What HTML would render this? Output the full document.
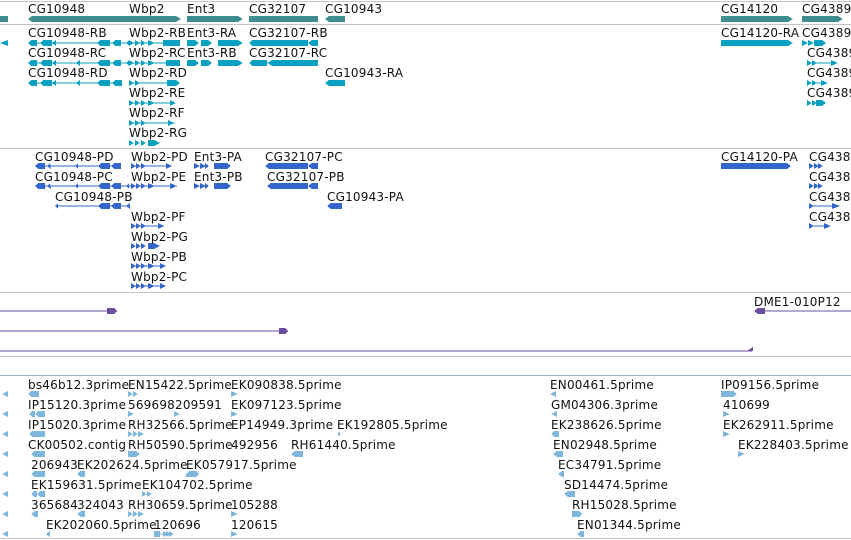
<!DOCTYPE html>
<html><head><meta charset="utf-8"><style>
html,body{margin:0;padding:0;background:#fff;width:851px;height:540px;overflow:hidden}
svg{display:block}
text{font-family:"DejaVu Sans","Liberation Sans",sans-serif;font-size:12px;fill:#111;letter-spacing:0.2px}
</style></head><body>
<svg width="851" height="540" viewBox="0 0 851 540" xmlns="http://www.w3.org/2000/svg" shape-rendering="crispEdges">
<rect x="0" y="1" width="851" height="1" fill="#c4c4c4"/>
<rect x="0" y="24" width="851" height="1" fill="#c4c4c4"/>
<rect x="0" y="148" width="851" height="1" fill="#c4c4c4"/>
<rect x="0" y="292" width="851" height="1" fill="#c4c4c4"/>
<rect x="0" y="356" width="851" height="1" fill="#c4c4c4"/>
<rect x="0" y="375" width="851" height="1" fill="#8fb7d6"/>
<rect x="0" y="538" width="851" height="1" fill="#c4c4c4"/>

<g fill="#3f8d8f">
<rect x="0" y="16" width="8" height="6"/>
<polygon points="28,19 32,16 176,16 181,19 176,22 32,22"/>
<polygon points="187,16 238,16 243,19 238,22 187,22"/>
<rect x="249" y="16" width="69" height="6"/>
<polygon points="325,19 329,16 345,16 345,22 329,22"/>
<polygon points="721,16 788,16 793,19 788,22 721,22"/>
<polygon points="802,16 838,16 843,19 838,22 802,22"/>
</g>
<text x="28" y="13">CG10948</text>
<text x="129" y="13">Wbp2</text>
<text x="187" y="13">Ent3</text>
<text x="249" y="13">CG32107</text>
<text x="325" y="13">CG10943</text>
<text x="721" y="13">CG14120</text>
<text x="802" y="13">CG4389</text>

<g fill="#0aa0c0">
<polygon points="0,43 8,40 8,46"/>
<rect x="28" y="42.5" width="152" height="1"/>
<polygon points="28,43 31,40 37,40 37,46 31,46"/><polygon points="40,43 43,40 52,40 52,46 43,46"/>
<polygon points="52,43 56,40 56,46"/>
<polygon points="97,43 100,40 110,40 110,46 100,46"/><polygon points="112,43 115,40 121,40 121,46 115,46"/>
<polygon points="126,43 129,40 129,46"/>
<polygon points="129,40 134,43 129,46"/><polygon points="135,40 140,43 135,46"/><polygon points="141,40 146,43 141,46"/><polygon points="148,40 155,43 148,46"/>
<polygon points="163,40 170,40 174,43 170,46 163,46"/><rect x="168" y="40" width="12" height="6"/>
<polygon points="187,40 195,40 199,43 195,46 187,46"/><polygon points="201,40 208,40 212,43 208,46 201,46"/><polygon points="218,40 238,40 243,43 238,46 218,46"/>
<polygon points="249,43 252,40 308,40 308,46 252,46"/><polygon points="308,43 312,40 318,40 318,46 312,46"/>
<polygon points="721,40 788,40 793,43 788,46 721,46"/>
<polygon points="802,40 808,43 802,46"/><polygon points="808,40 814,43 808,46"/><polygon points="814,40 822,40 826,43 822,46 814,46"/>

<rect x="28" y="62.5" width="152" height="1"/>
<polygon points="28,63 31,60 37,60 37,66 31,66"/><polygon points="40,63 43,60 52,60 52,66 43,66"/>
<polygon points="52,63 56,60 56,66"/><polygon points="76,63 80,60 80,66"/>
<polygon points="97,63 100,60 110,60 110,66 100,66"/><polygon points="112,63 115,60 121,60 121,66 115,66"/>
<polygon points="126,63 129,60 129,66"/>
<polygon points="129,60 134,63 129,66"/><polygon points="135,60 140,63 135,66"/><polygon points="141,60 146,63 141,66"/><polygon points="148,60 155,63 148,66"/>
<rect x="166" y="60" width="14" height="6"/>
<polygon points="187,60 195,60 199,63 195,66 187,66"/><polygon points="201,60 208,60 212,63 208,66 201,66"/><polygon points="218,60 238,60 243,63 238,66 218,66"/>
<rect x="267" y="62.5" width="3" height="1"/>
<polygon points="249,63 252,60 267,60 267,66 252,66"/><polygon points="268,63 272,60 318,60 318,66 272,66"/>
<rect x="807" y="62.5" width="30" height="1"/>
<polygon points="807,60 812,63 807,66"/><polygon points="812,60 817,63 812,66"/><polygon points="831,60 838,63 831,66"/>

<rect x="28" y="82.5" width="94" height="1"/>
<polygon points="28,83 31,80 37,80 37,86 31,86"/><polygon points="40,83 43,80 52,80 52,86 43,86"/>
<polygon points="52,83 56,80 56,86"/><polygon points="76,83 80,80 80,86"/>
<polygon points="97,83 100,80 110,80 110,86 100,86"/><polygon points="112,83 115,80 122,80 122,86 115,86"/>
<rect x="129" y="82.5" width="50" height="1"/>
<polygon points="129,80 134,83 129,86"/><polygon points="135,80 140,83 135,86"/><polygon points="167,80 176,80 180,83 176,86 167,86"/>
<polygon points="325,83 329,80 345,80 345,86 329,86"/>
<rect x="807" y="82.5" width="20" height="1"/>
<polygon points="807,80 812,83 807,86"/><polygon points="812,80 817,83 812,86"/><polygon points="821,80 828,83 821,86"/>

<rect x="129" y="102.5" width="46" height="1"/>
<polygon points="129,100 134,103 129,106"/><polygon points="135,100 140,103 135,106"/><polygon points="141,100 146,103 141,106"/><polygon points="148,100 155,103 148,106"/><polygon points="170,100 176,103 170,106"/>
<polygon points="807,100 812,103 807,106"/><polygon points="812,100 817,103 812,106"/><polygon points="816,100 822,100 826,103 822,106 816,106"/>

<rect x="129" y="122.5" width="46" height="1"/>
<polygon points="129,120 134,123 129,126"/><polygon points="135,120 140,123 135,126"/><polygon points="141,120 146,123 141,126"/><polygon points="168,120 174,123 168,126"/>

<polygon points="129,140 134,143 129,146"/><polygon points="135,140 140,143 135,146"/><polygon points="141,140 146,143 141,146"/><polygon points="148,140 154,140 157,143 154,146 148,146"/><polygon points="154,140 160,143 154,146"/>
</g>
<text x="28" y="37">CG10948-RB</text><text x="129" y="37">Wbp2-RB</text><text x="187" y="37">Ent3-RA</text><text x="249" y="37">CG32107-RB</text>
<text x="28" y="57">CG10948-RC</text><text x="129" y="57">Wbp2-RC</text><text x="187" y="57">Ent3-RB</text><text x="249" y="57">CG32107-RC</text>
<text x="28" y="77">CG10948-RD</text><text x="129" y="77">Wbp2-RD</text><text x="325" y="77">CG10943-RA</text>
<text x="129" y="97">Wbp2-RE</text><text x="129" y="117">Wbp2-RF</text><text x="129" y="137">Wbp2-RG</text>
<text x="721" y="37">CG14120-RA</text><text x="802" y="37">CG4389</text>
<text x="807" y="57">CG4389</text><text x="807" y="77">CG4389</text><text x="807" y="97">CG4389</text>

<g fill="#3366cc">
<rect x="35" y="165.5" width="86" height="1"/>
<polygon points="35,166 38,163 45,163 45,169 38,169"/><polygon points="47,166 50,163 51,169"/><polygon points="75,166 78,163 78,169"/>
<polygon points="98,166 101,163 110,163 110,169 101,169"/><polygon points="111,166 114,163 121,163 121,169 114,169"/>
<rect x="131" y="165.5" width="40" height="1"/>
<polygon points="131,163 136,166 131,169"/><polygon points="136,163 141,166 136,169"/><polygon points="141,163 146,166 141,169"/><polygon points="166,163 172,166 166,169"/>
<polygon points="194,163 200,166 194,169"/><polygon points="200,163 206,166 200,169"/><polygon points="205,163 209,166 205,169"/><polygon points="214,163 227,163 231,166 227,169 214,169"/>
<polygon points="265,166 269,163 308,163 308,169 269,169"/><polygon points="308,166 312,163 318,163 318,169 312,169"/>
<polygon points="721,163 787,163 791,166 787,169 721,169"/>
<polygon points="809,163 814,166 809,169"/><polygon points="814,163 819,166 814,169"/><polygon points="818,163 823,166 818,169"/>
<rect x="35" y="185.5" width="142" height="1"/>
<polygon points="35,186 38,183 45,183 45,189 38,189"/><polygon points="47,186 50,183 51,189"/><polygon points="75,186 78,183 78,189"/>
<polygon points="98,186 101,183 110,183 110,189 101,189"/><polygon points="111,186 114,183 121,183 121,189 114,189"/><polygon points="126,186 129,183 129,189"/>
<polygon points="131,183 136,186 131,189"/><polygon points="136,183 141,186 136,189"/><polygon points="141,183 146,186 141,189"/><polygon points="148,183 155,186 148,189"/><polygon points="170,183 177,186 170,189"/>
<polygon points="194,183 200,186 194,189"/><polygon points="200,183 206,186 200,189"/><polygon points="205,183 209,186 205,189"/><polygon points="214,183 227,183 231,186 227,189 214,189"/>
<polygon points="267,186 271,183 308,183 308,189 271,189"/><polygon points="308,186 312,183 318,183 318,189 312,189"/>
<polygon points="809,183 814,186 809,189"/><polygon points="814,183 819,186 814,189"/><polygon points="818,183 823,186 818,189"/>
<rect x="55" y="205.5" width="75" height="1"/>
<polygon points="55,206 58,203 58,209"/>
<polygon points="98,206 101,203 110,203 110,209 101,209"/><polygon points="111,206 114,203 121,203 121,209 114,209"/><polygon points="126,206 130,203 130,209"/>
<polygon points="327,206 331,203 342,203 342,209 331,209"/>
<rect x="809" y="205.5" width="30" height="1"/>
<polygon points="809,203 814,206 809,209"/><polygon points="832,203 840,206 832,209"/>
<rect x="131" y="225.5" width="33" height="1"/>
<polygon points="131,223 136,226 131,229"/><polygon points="136,223 141,226 136,229"/><polygon points="141,223 146,226 141,229"/><polygon points="158,223 164,226 158,229"/>
<rect x="809" y="225.5" width="20" height="1"/>
<polygon points="809,223 814,226 809,229"/><polygon points="824,223 831,226 824,229"/>
<polygon points="131,243 136,246 131,249"/><polygon points="136,243 141,246 136,249"/><polygon points="141,243 146,246 141,249"/><polygon points="148,243 154,243 157,246 154,249 148,249"/><polygon points="154,243 160,246 154,249"/>
<rect x="131" y="265.5" width="34" height="1"/>
<polygon points="131,263 136,266 131,269"/><polygon points="136,263 141,266 136,269"/><polygon points="141,263 146,266 141,269"/><polygon points="148,263 155,266 148,269"/><polygon points="160,263 166,266 160,269"/>
<rect x="131" y="285.5" width="34" height="1"/>
<polygon points="131,283 136,286 131,289"/><polygon points="136,283 141,286 136,289"/><polygon points="141,283 146,286 141,289"/><polygon points="148,283 155,286 148,289"/><polygon points="160,283 166,286 160,289"/>
</g>
<text x="35" y="161">CG10948-PD</text><text x="131" y="161">Wbp2-PD</text><text x="194" y="161">Ent3-PA</text><text x="265" y="161">CG32107-PC</text>
<text x="35" y="181">CG10948-PC</text><text x="131" y="181">Wbp2-PE</text><text x="194" y="181">Ent3-PB</text><text x="267" y="181">CG32107-PB</text>
<text x="55" y="201">CG10948-PB</text><text x="327" y="201">CG10943-PA</text>
<text x="131" y="221">Wbp2-PF</text><text x="131" y="241">Wbp2-PG</text><text x="131" y="261">Wbp2-PB</text><text x="131" y="281">Wbp2-PC</text>
<text x="721" y="161">CG14120-PA</text><text x="809" y="161">CG438</text><text x="809" y="181">CG438</text><text x="809" y="201">CG438</text><text x="809" y="221">CG438</text>

<g fill="#6a4fa0">
<rect x="0" y="310.5" width="110" height="1.2"/><polygon points="107,308 114,308 117,311 114,314 107,314"/>
<rect x="0" y="330.5" width="282" height="1.2"/><polygon points="279,328 285,328 288,331 285,334 279,334"/>
<rect x="0" y="350.5" width="752" height="1.2"/><polygon points="747,351 753,347 753,351"/>
<rect x="760" y="310.5" width="91" height="1.2"/><polygon points="754,311 758,308 765,308 765,314 758,314"/>
</g>
<text x="754" y="306">DME1-010P12</text>

<g fill="#7fb6dc">
<polygon points="2,394 8,391 8,397"/><polygon points="2,414 8,411 8,417"/><polygon points="2,434 8,431 8,437"/><polygon points="2,454 8,451 8,457"/>
<polygon points="2,474 8,471 8,477"/><polygon points="2,494 8,491 8,497"/><polygon points="2,514 8,511 8,517"/><polygon points="2,534 8,531 8,537"/>
<polygon points="28,394 31,391 39,391 39,397 31,397"/><polygon points="128,391 133,394 128,397"/><polygon points="133,391 138,394 133,397"/><polygon points="231,391 238,394 231,397"/>
<polygon points="550,394 556,391 556,397"/><polygon points="721,391 733,391 737,394 733,397 721,397"/>
<polygon points="29,414 32,411 35,411 35,417 32,417"/><polygon points="35,414 38,411 45,411 45,417 38,417"/><polygon points="128,411 134,414 128,417"/><polygon points="174,411 180,414 174,417"/><polygon points="231,411 238,414 231,417"/>
<polygon points="551,414 557,411 557,417"/><polygon points="723,411 730,414 723,417"/>
<polygon points="29,434 32,431 45,431 45,437 32,437"/><polygon points="128,431 133,434 128,437"/><polygon points="133,431 138,434 133,437"/><polygon points="138,431 144,434 138,437"/><polygon points="337,434 340,431 340,437"/>
<polygon points="551,434 554,431 559,431 559,437 554,437"/><polygon points="723,431 730,434 723,437"/>
<polygon points="31,454 34,451 45,451 45,457 34,457"/><polygon points="128,451 136,451 140,454 136,457 128,457"/><polygon points="291,454 295,451 303,451 303,457 295,457"/>
<polygon points="553,454 557,451 563,451 563,457 557,457"/><polygon points="738,451 745,454 738,457"/>
<polygon points="31,474 34,471 45,471 45,477 34,477"/><polygon points="77,474 80,471 85,471 85,477 80,477"/><polygon points="186,474 189,471 196,471 199,474 196,477 186,477"/>
<polygon points="558,474 562,471 564,471 564,477 562,477"/>
<polygon points="31,494 34,491 37,491 37,497 34,497"/><polygon points="37,494 40,491 45,491 45,497 40,497"/><polygon points="142,491 147,494 142,497"/><polygon points="147,491 152,494 147,497"/>
<polygon points="564,494 568,491 575,491 575,497 568,497"/>
<polygon points="31,514 35,511 38,511 38,517 35,517"/><polygon points="77,514 81,511 85,511 85,517 81,517"/><polygon points="128,511 133,514 128,517"/><polygon points="133,511 138,514 133,517"/><polygon points="138,511 144,514 138,517"/><polygon points="231,511 238,514 231,517"/>
<polygon points="572,511 579,511 582,514 579,517 572,517"/>
<polygon points="46,534 50,531 50,537"/><polygon points="154,531 160,531 160,537 154,537"/><rect x="154" y="533.5" width="10" height="1"/><polygon points="163,531 168,534 163,537"/><polygon points="166,531 171,534 166,537"/><polygon points="169,531 174,534 169,537"/><polygon points="231,531 238,534 231,537"/>
<polygon points="577,534 581,531 584,531 584,537 581,537"/>
</g>
<text x="28" y="389">bs46b12.3prime</text><text x="128" y="389">EN15422.5prime</text><text x="231" y="389">EK090838.5prime</text><text x="550" y="389">EN00461.5prime</text><text x="721" y="389">IP09156.5prime</text>
<text x="28" y="409">IP15120.3prime</text><text x="128" y="409">569698</text><text x="175" y="409">209591</text><text x="231" y="409">EK097123.5prime</text><text x="551" y="409">GM04306.3prime</text><text x="723" y="409">410699</text>
<text x="28" y="429">IP15020.3prime</text><text x="128" y="429">RH32566.5prime</text><text x="231" y="429">EP14949.3prime</text><text x="337" y="429">EK192805.5prime</text><text x="551" y="429">EK238626.5prime</text><text x="723" y="429">EK262911.5prime</text>
<text x="28" y="449">CK00502.contig</text><text x="128" y="449">RH50590.5prime</text><text x="231" y="449">492956</text><text x="291" y="449">RH61440.5prime</text><text x="553" y="449">EN02948.5prime</text><text x="738" y="449">EK228403.5prime</text>
<text x="31" y="469">206943</text><text x="77" y="469">EK202624.5prime</text><text x="186" y="469">EK057917.5prime</text><text x="558" y="469">EC34791.5prime</text>
<text x="31" y="489">EK159631.5prime</text><text x="142" y="489">EK104702.5prime</text><text x="564" y="489">SD14474.5prime</text>
<text x="31" y="509">365684</text><text x="77" y="509">324043</text><text x="128" y="509">RH30659.5prime</text><text x="231" y="509">105288</text><text x="572" y="509">RH15028.5prime</text>
<text x="46" y="529">EK202060.5prime</text><text x="154" y="529">120696</text><text x="231" y="529">120615</text><text x="577" y="529">EN01344.5prime</text>
</svg>
</body></html>
